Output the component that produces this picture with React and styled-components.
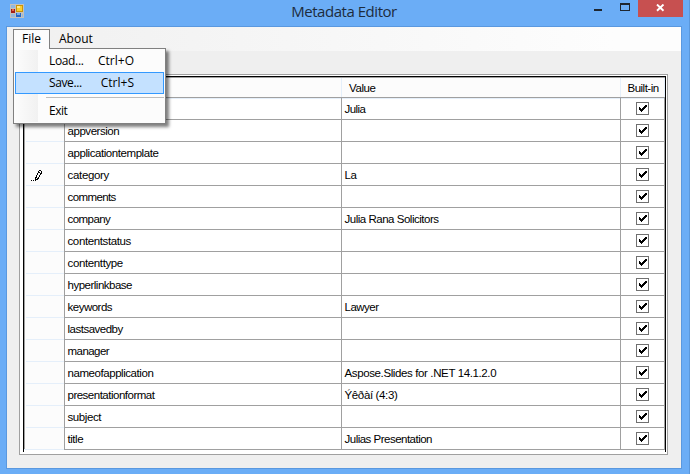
import React from 'react';
import styled, { createGlobalStyle } from 'styled-components';

const Global = createGlobalStyle`
  * { box-sizing: border-box; }
  body { margin: 0; overflow: hidden; }
`;

const Window = styled.main`
  width: 690px;
  height: 474px;
  padding: 0 7px 5px 6px;
  display: flex;
  flex-direction: column;
  background: #6badf6;
  border-right: 1px solid #5b98dc;
  color: #000;
`;

const TitleBar = styled.header`
  height: 26px;
  flex: none;
  display: grid;
  grid-template-columns: 100px 1fr 100px;
  align-items: start;
`;

const AppIcon = styled.svg`
  display: block;
  margin: 4px 0 0 4px;
`;

const Title = styled.h1`
  margin: 0;
  padding-top: 1px;
  text-align: center;
  font: 400 15px/20px 'Open Sans', sans-serif;
  letter-spacing: -0.46px;
  color: #1d2c3d;
`;

const Controls = styled.div`
  display: flex;
  justify-content: flex-end;
  margin-right: -1px;
`;

const Control = styled.div`
  width: ${(p) => (p.$close ? 45 : 27)}px;
  height: 17px;
  display: flex;
  align-items: flex-start;
  justify-content: center;
  padding-top: ${(p) => p.$top}px;
  background: ${(p) => (p.$close ? '#c75050' : 'transparent')};
  svg { display: block; }
`;

const Client = styled.section`
  flex: 1;
  display: flex;
  flex-direction: column;
  background: #efefef;
  border: 1px solid #5a98df;
`;

const MenuBar = styled.nav`
  position: relative;
  height: 24px;
  display: flex;
  padding: 2px 0 0 6px;
  background: linear-gradient(90deg, #f0f0f0, #fdfdfd 90%);
  font: 400 12px/20px 'Open Sans', sans-serif;
`;

const MenuItem = styled.div`
  height: 20px;
  width: ${(p) => p.$w}px;
  padding-left: 8px;
  border: 1px solid ${(p) => (p.$open ? '#808080' : 'transparent')};
  border-bottom: 0;
  background: ${(p) => (p.$open ? '#fcfcfc' : 'transparent')};
  line-height: 18px;
  position: relative;
  z-index: ${(p) => (p.$open ? 3 : 0)};
`;

const Popup = styled.div`
  position: absolute;
  z-index: 2;
  left: 6px;
  top: 21px;
  width: 153px;
  height: 76px;
  padding: 1px;
  border: 1px solid #808080;
  background: linear-gradient(90deg, #fcfcfc, #f1f1f1) 1px 1px / 23px 72px no-repeat, #fcfcfc;
  box-shadow: 3px 3px 3px rgba(0, 0, 0, 0.5);
`;

const Command = styled.div`
  height: 22px;
  display: flex;
  justify-content: space-between;
  padding: 0 29px 0 33px;
  line-height: 20px;
  letter-spacing: ${(p) => p.$ls || 0}px;
  border: 1px solid ${(p) => (p.$hot ? '#3399ff' : 'transparent')};
  background: ${(p) => (p.$hot ? '#c4e1ff' : 'transparent')};
`;

const Shortcut = styled.span`
  letter-spacing: 0;
`;

const Divider = styled.hr`
  height: 1px;
  margin: 3px 0 2px 31px;
  border: 0;
  background: #bdbdbd;
`;

const Frame = styled.div`
  width: 649px;
  height: 381px;
  margin: 23px 0 0 12px;
  padding: 1px 1px 2px 3px;
  border: 1px solid #a0a0a0;
  background: #fff;
`;

const Grid = styled.div`
  width: 643px;
  height: 376px;
  border: 1px solid #000;
  border-bottom: 0;
  font: 400 11.5px/23px 'Liberation Sans', sans-serif;
`;

const Row = styled.div`
  display: grid;
  grid-template-columns: 41px 277px 279px 44px;
  height: 22px;
`;

const HeaderRow = styled(Row)`
  height: 20px;
  border-top: 1px solid #a0a0a0;
`;

const HeadCell = styled.div`
  padding: 1px 0 0 ${(p) => p.$pad || 0}px;
  line-height: 19px;
  letter-spacing: ${(p) => p.$ls || 0}px;
  white-space: nowrap;
  background: #fcfcfc;
  border-right: 1px solid #e5effa;
  border-bottom: 1px solid #e5effa;
  &:first-child { border-left: 1px solid #a0a0a0; }
`;

const Gutter = styled.div`
  background: #fcfcfc;
  border-left: 1px solid #a0a0a0;
  border-right: 1px solid #a0a0a0;
  padding: 0 0 0 6px;
  &::before {
    content: '';
    display: block;
    height: 1px;
    margin: 0 0 6px -5px;
    background: ${(p) => (p.$first ? '#a0a0a0' : '#e5effa')};
  }
  svg { display: block; }
`;

const Cell = styled.div`
  height: 22px;
  padding-left: 2.5px;
  border-top: 1px solid #a0a0a0;
  border-right: 1px solid #a0a0a0;
  letter-spacing: ${(p) => p.$ls || 0}px;
  white-space: nowrap;
`;

const CheckCell = styled(Cell)`
  padding: 4px 0 0 15px;
  svg { display: block; }
`;

const BottomEdge = styled.div`
  height: 1px;
  background: linear-gradient(90deg, #e5effa 40px, #a0a0a0 40px);
`;

/* ls and vls are the tracking of the name and of the value */
const rows = [
  { name: '', value: 'Julia', vls: -0.55 },
  { name: 'appversion', ls: -0.45 },
  { name: 'applicationtemplate', ls: -0.43 },
  { name: 'category', ls: -0.32, value: 'La', vls: -0.4, editing: true },
  { name: 'comments', ls: -0.6 },
  { name: 'company', ls: -0.55, value: 'Julia Rana Solicitors', vls: -0.48 },
  { name: 'contentstatus', ls: -0.38 },
  { name: 'contenttype', ls: -0.37 },
  { name: 'hyperlinkbase', ls: -0.5 },
  { name: 'keywords', ls: -0.5, value: 'Lawyer', vls: -0.5 },
  { name: 'lastsavedby', ls: -0.5 },
  { name: 'manager', ls: -0.55 },
  { name: 'nameofapplication', ls: -0.44, value: 'Aspose.Slides for .NET 14.1.2.0', vls: -0.38 },
  { name: 'presentationformat', ls: -0.5, value: 'Ýêðàí (4:3)', vls: -0.36 },
  { name: 'subject', ls: -0.42 },
  { name: 'title', ls: -0.45, value: 'Julias Presentation', vls: -0.51 },
];

const Check = () => (
  <svg width="13" height="13" shapeRendering="crispEdges">
    <rect x=".5" y=".5" width="12" height="12" fill="#fff" stroke="#707070" />
    <path d="M3 5h1v1h1v1h1v-1h1v-1h1v-1h1v-1h2v2h-1v1h-1v1h-1v1h-1v1h-1v1h-1v-1h-1v-1h-1z" fill="#000" />
  </svg>
);

const Pencil = () => (
  <svg width="12" height="12" shapeRendering="crispEdges">
    <path
      d="M8 0h2v1h-2zM7 1h1v2h-1zM10 1h1v3h-1zM8 2h1v1h-1zM6 3h1v2h-1zM9 3h1v2h-1zM5 5h1v2h-1zM8 5h1v2h-1zM4 7h1v4h-1zM7 7h1v2h-1zM5 7h1v1h-1zM6 8h1v1h-1zM5 9h2v1h-2zM0 10h1v1h-1zM2 10h1v1h-1z"
      fill="#000"
    />
  </svg>
);

export default function App() {
  return (
    <Window>
      <Global />
      <TitleBar>
        <AppIcon width="14" height="14" shapeRendering="crispEdges">
          <path d="M0 0h14v14H0z" fill="#c4c2bd" />
          <path d="M1 1h4v3H1zM1 10h4v3H1zM12 10h1v3h-1z" fill="#92b8df" />
          <path d="M1 5h4v4H1z" fill="#a51d16" />
          <path d="M2 5h2v2H2z" fill="#df6b50" />
          <path d="M6 1h7v7H6z" fill="#c99408" />
          <path d="M7 2h5v5H7z" fill="#f9cf36" />
          <path d="M7 2h3v2H7z" fill="#ffea8e" />
          <path d="M6 9h5v4H6z" fill="#2466c4" />
          <path d="M7 9h3v2H7z" fill="#72a9ed" />
        </AppIcon>
        <Title>Metadata Editor</Title>
        <Controls>
          <Control $top={9}>
            <svg width="8" height="2" shapeRendering="crispEdges"><path d="M0 0h8v2H0z" fill="#1e2630" /></svg>
          </Control>
          <Control $top={3}>
            <svg width="9" height="8" overflow="visible" shapeRendering="crispEdges">
              <path d="M0 0h10v8H0zM1 2v5h8V2z" fill="#1e2630" fillRule="evenodd" />
            </svg>
          </Control>
          <Control $close $top={4}>
            <svg width="9" height="8"><path d="M1 .5l6.5 6.3M7.5.5L1 6.8" stroke="#fff" strokeWidth="1.9" /></svg>
          </Control>
        </Controls>
      </TitleBar>
      <Client>
        <MenuBar>
          <MenuItem $open $w={37}>File</MenuItem>
          <MenuItem $w={50}>About</MenuItem>
          <Popup>
            <Command $ls={-0.35}>Load...<Shortcut>Ctrl+O</Shortcut></Command>
            <Command $hot $ls={-0.38}>Save...<Shortcut>Ctrl+S</Shortcut></Command>
            <Divider />
            <Command $ls={-0.5}>Exit</Command>
          </Popup>
        </MenuBar>
        <Frame>
          <Grid>
            <HeaderRow>
              <HeadCell />
              <HeadCell />
              <HeadCell $pad={7} $ls={-0.4}>Value</HeadCell>
              <HeadCell $pad={6.5} $ls={-0.5}>Built-in</HeadCell>
            </HeaderRow>
            {rows.map((row, i) => (
              <Row key={i}>
                <Gutter $first={i === 0}>{row.editing && <Pencil />}</Gutter>
                <Cell $ls={row.ls}>{row.name}</Cell>
                <Cell $ls={row.vls}>{row.value}</Cell>
                <CheckCell><Check /></CheckCell>
              </Row>
            ))}
            <BottomEdge />
          </Grid>
        </Frame>
      </Client>
    </Window>
  );
}
